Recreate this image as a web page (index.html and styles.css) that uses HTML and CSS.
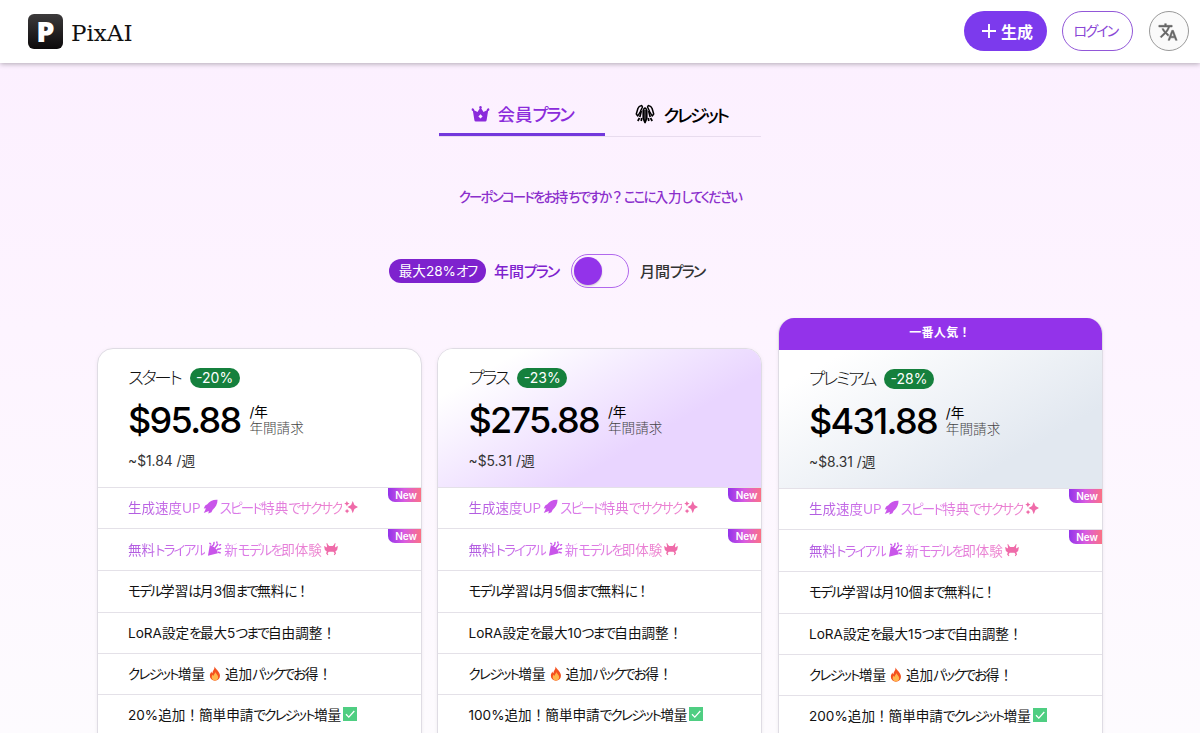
FILE: index.html
```html
<!DOCTYPE html>
<html lang="ja">
<head>
    <meta charset="UTF-8">
    <meta name="viewport" content="width=device-width, initial-scale=1.0">
    <title>PixAI</title>
    <link rel="stylesheet" href="styles.css">
</head>
<body>
    <svg class="sprite" width="0" height="0">
        <symbol id="rocket" viewBox="0 0 16 16">
            <path d="M15.500.8C10.500.5 6.800 2.500 4.600 5.700L2.300 7 .8 10.200l2.200-.3L2.300 12 .8 15l3.400-1.500 2-.6-.5 2.600L9 14l1.300-2.600C13.500 9 15.500 5.500 15.500.8z"/>
        </symbol>
        <symbol id="sparkles" viewBox="0 0 16 16">
            <path d="M10 1l1.900 4.700L16 8l-4.100 2.300L10 15l-1.900-4.700L4 8l4.100-2.300z"/>
            <path d="M3.300 1l1 2 2 1-2 1-1 2-1-2-2-1 2-1zM3.500 10l.9 1.800 1.800.9-1.800.9-.9 1.800-.9-1.800-1.800-.9 1.800-.9z"/>
        </symbol>
        <symbol id="popper" viewBox="0 0 16 16">
            <path d="M3 4.500C7 5 11 9 11.500 13L1 15.800z"/>
            <path d="M6 5C8 4 7 3 7.500 1.500M8.500 7.500L11.500 3.500M10.500 9.500c2-2 2.500 0 4-1.500M12 12l2 .5M3 2.500l1 .7M10.500 1v1M13.500 4.500l1-.6" fill="none" stroke="currentColor" stroke-width="1.500" stroke-linecap="round"/>
        </symbol>
        <symbol id="monster" viewBox="0 0 16 16">
            <path d="M3.500 1l1.300 2.500L6 4.500h4l1.200-1L12.500 1l.7.5-.7 3.500 1 1.200L15 4.500l.8.5-.8 4-2 1.800.8 2.200-1.800 2-.8-.5.900-1.700-1.300-1.800H5.400l-1.300 1.800.9 1.700-.8.5-1.800-2L3.200 10.800 1 9 .2 5l.8-.5 1.500 1.700 1-1.200-.7-3.500z"/>
        </symbol>
        <symbol id="fire" viewBox="0 0 14 16">
            <path d="M6.500.5c1 3 5.800 5.300 5.800 10A5.300 5.300 0 0 1 7 15.800 5.400 5.400 0 0 1 1.500 10.400c0-2 .8-3.400 1.800-4.600 0 1 .3 1.600.9 2C4.200 5 6.800 3.500 6.500.5z" fill="#f4511e"/>
            <path d="M7.400 6.500c.5 2 3 3 3 5.500 0 2-1.600 3.500-3.500 3.500S3.500 14 3.500 12c0-1.300.5-2 1.100-2.700.2.700.6 1 1 1.100.1-1.500 1.700-2.300 1.800-3.900z" fill="#ffb64c"/>
        </symbol>
        <symbol id="check" viewBox="0 0 14 14">
            <path d="M0 0h14v14H0z" fill="#4fce82"/>
            <path d="M3 7.200l2.800 2.900L11.300 4" fill="none" stroke="#fff" stroke-width="1.300"/>
        </symbol>
    </svg>

    <header class="topbar">
        <a class="logo">
            <span class="logo-mark">P</span>
            <span class="logo-name">PixAI</span>
        </a>
        <div class="actions">
            <button class="btn btn-create">
                <svg width="16" height="16" viewBox="0 0 16 16"><path d="M8 1v14M1 8h14" stroke="#fff" stroke-width="1.900"/></svg>
                生成
            </button>
            <button class="btn btn-login"><span class="kana">ログイン</span></button>
            <button class="btn btn-lang">
                <svg width="20" height="20" viewBox="0 0 24 24"><path fill="#666" stroke="#666" stroke-width=".6" d="m12.870 15.070-2.540-2.510.03-.03A17.520 17.520 0 0 0 14.070 6H17V4h-7V2H8v2H1v2h11.170C11.500 7.920 10.440 9.750 9 11.350 8.070 10.320 7.300 9.190 6.690 8h-2c.73 1.630 1.730 3.170 2.980 4.560l-5.090 5.020L4 19l5-5 3.110 3.110.76-2.040zM18.500 10h-2L12 22h2l1.120-3h4.750L21 22h2l-4.500-12zm-2.620 7 1.620-4.330L19.120 17h-3.240z"/></svg>
            </button>
        </div>
    </header>

    <main>
        <nav class="tabs">
            <a class="tab active">
                <svg width="19" height="16" viewBox="0 0 19 16"><path fill="currentColor" fill-rule="evenodd" d="M9.500 0a1.400 1.400 0 0 1 .8 2.500L12.500 6l3.400-1.800a1.300 1.300 0 1 1 1.200.8L15.600 14.300q-.2 1.200-1.400 1.200H4.800q-1.200 0-1.400-1.200L1.900 5a1.300 1.300 0 1 1 1.200-.8L6.500 6l2.200-3.500A1.400 1.400 0 0 1 9.500 0zm0 8.300L7.400 10.400l2.100 2.100 2.100-2.100z"/></svg>
                <span>会員<span class="kana">プラン</span></span>
            </a>
            <a class="tab">
                <svg width="20" height="20" viewBox="0 0 20 20" fill="none" stroke="currentColor" stroke-width="1.500" stroke-linejoin="round">
                    <path d="M8.300 6.500Q8.600 4.500 10 4q1.400.5 1.700 2.500v8L10 18.500 8.300 14.500z" stroke-width="1.800"/>
                    <path d="M10 6v11"/>
                    <path d="M6.700 1.500q-3 .5-3.800 3L1.300 10l1.500 2 2.300-4 2.400-5zM13.300 1.500q3 .5 3.800 3L18.700 10l-1.500 2-2.300-4-2.400-5z"/>
                    <path d="M6.300 7L4.800 13M13.700 7l1.500 6M4.500 14l-1.700 3M6.700 14l-.5 3M15.500 14l1.700 3M13.300 14l.5 3" stroke-width="1.700"/>
                </svg>
                <span class="kana">クレジット</span>
            </a>
        </nav>

        <a class="coupon"><span class="kana">クーポンコードをお</span>持<span class="kana">ちですか</span>？<span class="kana">ここに</span>入力<span class="kana">してください</span></a>

        <div class="period">
            <span class="off-badge">最大28%<span class="kana">オフ</span></span>
            <span class="period-label selected">年間<span class="kana">プラン</span></span>
            <span class="switch"><span class="knob"></span></span>
            <span class="period-label">月間<span class="kana">プラン</span></span>
        </div>

        <section class="plans">
            <article class="plan">
                <div class="plan-head">
                    <div class="plan-title"><span class="kana">スタート</span><span class="discount">-20%</span></div>
                    <div class="price">
                        <span class="amount">$95.88</span>
                        <span class="per">/年<small>年間請求</small></span>
                    </div>
                    <div class="weekly">~$1.84 /週</div>
                </div>
                <ul class="features">
                    <li class="perk"><span class="shine">生成速度UP</span><svg class="emoji purple"><use href="#rocket"/></svg><span class="shine late"><span class="kana">スピード</span>特典<span class="kana">でサクサク</span></span><svg class="emoji pink"><use href="#sparkles"/></svg><b class="new">New</b></li>
                    <li class="perk"><span class="shine">無料<span class="kana">トライアル</span></span><svg class="emoji purple"><use href="#popper"/></svg><span class="shine late">新<span class="kana">モデルを</span>即体験</span><svg class="emoji pink"><use href="#monster"/></svg><b class="new">New</b></li>
                    <li><span class="kana">モデル</span>学習<span class="kana">は</span>月3個<span class="kana">まで</span>無料<span class="kana">に</span>！</li>
                    <li>LoRA設定<span class="kana">を</span>最大5<span class="kana">つまで</span>自由調整！</li>
                    <li><span class="kana">クレジット</span>増量<svg class="emoji fire"><use href="#fire"/></svg>追加<span class="kana">パックでお</span>得！</li>
                    <li>20%追加！簡単申請<span class="kana">でクレジット</span>増量<svg class="emoji check"><use href="#check"/></svg></li>
                </ul>
            </article>

            <article class="plan plus">
                <div class="plan-head">
                    <div class="plan-title"><span class="kana">プラス</span><span class="discount">-23%</span></div>
                    <div class="price">
                        <span class="amount">$275.88</span>
                        <span class="per">/年<small>年間請求</small></span>
                    </div>
                    <div class="weekly">~$5.31 /週</div>
                </div>
                <ul class="features">
                    <li class="perk"><span class="shine">生成速度UP</span><svg class="emoji purple"><use href="#rocket"/></svg><span class="shine late"><span class="kana">スピード</span>特典<span class="kana">でサクサク</span></span><svg class="emoji pink"><use href="#sparkles"/></svg><b class="new">New</b></li>
                    <li class="perk"><span class="shine">無料<span class="kana">トライアル</span></span><svg class="emoji purple"><use href="#popper"/></svg><span class="shine late">新<span class="kana">モデルを</span>即体験</span><svg class="emoji pink"><use href="#monster"/></svg><b class="new">New</b></li>
                    <li><span class="kana">モデル</span>学習<span class="kana">は</span>月5個<span class="kana">まで</span>無料<span class="kana">に</span>！</li>
                    <li>LoRA設定<span class="kana">を</span>最大10<span class="kana">つまで</span>自由調整！</li>
                    <li><span class="kana">クレジット</span>増量<svg class="emoji fire"><use href="#fire"/></svg>追加<span class="kana">パックでお</span>得！</li>
                    <li>100%追加！簡単申請<span class="kana">でクレジット</span>増量<svg class="emoji check"><use href="#check"/></svg></li>
                </ul>
            </article>

            <article class="plan premium">
                <div class="popular">一番人気！</div>
                <div class="plan-head">
                    <div class="plan-title"><span class="kana">プレミアム</span><span class="discount">-28%</span></div>
                    <div class="price">
                        <span class="amount">$431.88</span>
                        <span class="per">/年<small>年間請求</small></span>
                    </div>
                    <div class="weekly">~$8.31 /週</div>
                </div>
                <ul class="features">
                    <li class="perk"><span class="shine">生成速度UP</span><svg class="emoji purple"><use href="#rocket"/></svg><span class="shine late"><span class="kana">スピード</span>特典<span class="kana">でサクサク</span></span><svg class="emoji pink"><use href="#sparkles"/></svg><b class="new">New</b></li>
                    <li class="perk"><span class="shine">無料<span class="kana">トライアル</span></span><svg class="emoji purple"><use href="#popper"/></svg><span class="shine late">新<span class="kana">モデルを</span>即体験</span><svg class="emoji pink"><use href="#monster"/></svg><b class="new">New</b></li>
                    <li><span class="kana">モデル</span>学習<span class="kana">は</span>月10個<span class="kana">まで</span>無料<span class="kana">に</span>！</li>
                    <li>LoRA設定<span class="kana">を</span>最大15<span class="kana">つまで</span>自由調整！</li>
                    <li><span class="kana">クレジット</span>増量<svg class="emoji fire"><use href="#fire"/></svg>追加<span class="kana">パックでお</span>得！</li>
                    <li>200%追加！簡単申請<span class="kana">でクレジット</span>増量<svg class="emoji check"><use href="#check"/></svg></li>
                </ul>
            </article>
        </section>
    </main>
</body>
</html>
```
FILE: styles.css
```css
* {
    box-sizing: border-box;
}
body {
    margin: 0;
    height: 733px;
    overflow: hidden;
    font-family: Inter, "Noto Sans CJK JP", sans-serif;
    font-size: 14px;
    color: #111;
    background: linear-gradient(#fcf0ff 60px, #fdf4ff 330px, #fdfbfe 733px);
}
.sprite {
    position: absolute;
}
/* proportional, tightly set kana */
.kana {
    font-feature-settings: "palt";
    letter-spacing: -0.13em;
}
.topbar {
    display: flex;
    justify-content: space-between;
    height: 63px;
    padding: 11px 11px 0 28px;
    background: #fff;
    box-shadow: 0 1px 5px rgba(0, 0, 0, 0.3);
}
.logo {
    display: flex;
    gap: 8px;
    height: 40px;
    align-items: center;
}
.logo-mark {
    width: 35px;
    height: 35px;
    margin-top: 1px;
    border-radius: 6px;
    background: linear-gradient(#3c3a3b, #0c0a0b);
    color: #fff;
    font: 800 29px/33px "Open Sans", sans-serif;
    text-align: center;
}
.logo-name {
    font: 23px/40px "DejaVu Serif", serif;
    padding-top: 3px;
}
.actions {
    display: flex;
    gap: 15px;
}
.btn {
    display: flex;
    align-items: center;
    justify-content: center;
    height: 40px;
    padding: 0 0 1px;
    border-radius: 20px;
    font-family: inherit;
}
.btn-create {
    width: 83px;
    gap: 4px;
    padding-left: 3px;
    border: 0;
    background: #7c3aed;
    color: #fff;
    font-size: 16px;
    font-weight: 700;
}
.btn-login {
    width: 71px;
    padding: 0 4px 3px 0;
    border: 1px solid #9257d8;
    background: #fff;
    color: #8a46d6;
    font-size: 14px;
}
.btn-lang {
    width: 40px;
    margin-left: 1px;
    padding: 1px 2px 0 0;
    border: 1px solid #999;
    background: #fafafa;
}
.tabs {
    display: flex;
    width: 322px;
    height: 43px;
    margin: 31px auto 0;
    border-bottom: 1px solid #e8dcee;
    font-size: 17.500px;
    font-weight: 500;
    color: #000;
}
.tab {
    display: flex;
    align-items: center;
    justify-content: center;
    gap: 8px;
    width: 156px;
    padding: 0 3px 2px 0;
}
.tab.active {
    width: 166px;
    padding: 0 1px 0 0;
    border-bottom: 3px solid #7338dc;
    color: #8b2bdb;
}
.coupon {
    display: block;
    margin-top: 49px;
    line-height: 22px;
    text-align: center;
    font-size: 13.400px;
    font-weight: 500;
    color: #8b2fcc;
}
.period {
    display: flex;
    align-items: center;
    height: 34px;
    margin: 46px 0 0 389px;
    font-weight: 500;
}
.off-badge {
    width: 97px;
    margin-right: 8px;
    border-radius: 12px;
    background: #7e22ce;
    color: #fff;
    font-size: 13.600px;
    line-height: 24px;
    text-align: center;
    font-weight: 400;
}
.period-label {
    padding-bottom: 2px;
    font-size: 15px;
    color: #333;
}
.period-label.selected {
    width: 67px;
    color: #7e22ce;
}
.switch {
    width: 58px;
    height: 34px;
    margin: 0 11px 0 10px;
    padding: 2px;
    border: 1px solid #b168ed;
    border-radius: 17px;
}
.knob {
    display: block;
    width: 28px;
    height: 28px;
    border-radius: 50%;
    background: #9333ea;
    box-shadow: 0 1px 2px rgba(0, 0, 0, 0.2);
}
.plans {
    display: grid;
    grid-template-columns: repeat(3, 325px);
    gap: 15.500px;
    width: 1007px;
    margin: 29.500px auto 0;
}
.plan {
    margin-top: 30px;
    border: 1px solid #dfdce4;
    border-radius: 16px 16px 0 0;
    background: #fff;
    overflow: hidden;
    box-shadow: 0 1px 4px rgba(0, 0, 0, 0.06);
}
.plan.premium {
    margin-top: 0;
    border-top: 0;
}
.popular {
    height: 32px;
    margin: 0 -1px;
    background: #9333ea;
    color: #fff;
    font-size: 12px;
    font-weight: 700;
    letter-spacing: 0.3px;
    line-height: 30px;
    text-align: center;
}
.plan-head {
    height: 138px;
    padding: 15px 30.500px 0;
}
.plus .plan-head {
    background: linear-gradient(150deg, #fff 15%, #e9d5ff 65%);
}
.premium .plan-head {
    background: linear-gradient(150deg, #fff 12%, #e2e8f0 75%);
}
.plan-title {
    display: flex;
    align-items: center;
    gap: 9px;
    height: 28px;
    font-size: 17.500px;
    font-weight: 300;
}
.plan-title .kana {
    padding-bottom: 2px;
}
.discount {
    width: 50px;
    margin-top: 1px;
    border-radius: 10px;
    background: #15803d;
    color: #fff;
    font-size: 14px;
    font-weight: 400;
    line-height: 20px;
    text-align: center;
}
.price {
    display: flex;
    align-items: center;
    gap: 9px;
    height: 56px;
    color: #000;
}
.amount {
    padding-top: 1px;
    font-size: 36px;
    font-weight: 500;
    letter-spacing: -1.700px;
}
.per {
    font-size: 13.600px;
    line-height: 16px;
}
.per small {
    display: block;
    font-size: 13.600px;
    font-weight: 300;
    color: #444;
}
.weekly {
    height: 27px;
    line-height: 27px;
    font-size: 13.800px;
    color: #333;
}
.features {
    margin: 0;
    padding: 0;
    list-style: none;
}
.features li {
    display: flex;
    align-items: center;
    height: 41.300px;
    padding: 0 0 2px 30.500px;
    border-top: 1px solid #e4e1e8;
    font-size: 13.600px;
    white-space: pre;
}
.features .perk {
    position: relative;
    height: 41.900px;
    font-size: 13.500px;
}
.shine {
    background: linear-gradient(90deg, #b05be0, #d778ec);
    background-clip: text;
    -webkit-background-clip: text;
    color: transparent;
}
.shine.late {
    background-image: linear-gradient(90deg, #d778ec, #ee83cd);
}
.emoji {
    width: 15px;
    height: 15px;
    margin: 0 2px;
    flex: none;
}
.purple {
    fill: #c955ea;
    color: #c955ea;
}
.pink {
    width: 14px;
    height: 14px;
    fill: #ef6ba9;
}
.fire {
    width: 14px;
    margin: 0 3px;
}
.check {
    width: 14px;
    height: 14px;
}
/* ribbon in the row's top right corner */
.new {
    position: absolute;
    top: 0;
    right: 0;
    width: 33px;
    padding-left: 4px;
    border-bottom-left-radius: 7px;
    background: linear-gradient(90deg, #9333ea, #d95be0 50%, #fb7185);
    color: #fff;
    font-size: 10px;
    font-weight: 600;
    line-height: 14px;
    text-align: center;
}
```
